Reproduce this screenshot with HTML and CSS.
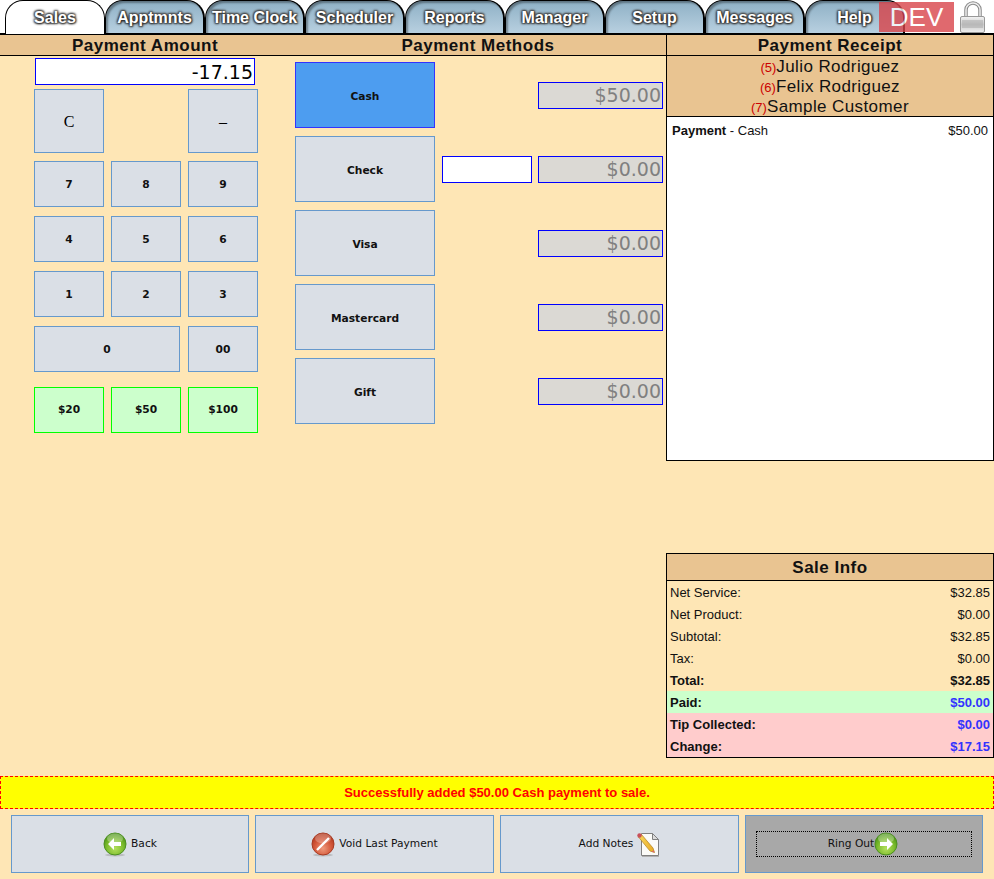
FILE: index.html
```html
<!DOCTYPE html>
<html lang="en">

<head>
    <meta charset="UTF-8">
    <meta name="viewport" content="width=device-width, initial-scale=1.0">
    <title>Payment</title>
    <link rel="stylesheet" href="styles.css">
</head>

<body>

    <svg class="defs" width="0" height="0" aria-hidden="true">
        <defs>
            <radialGradient id="greenBall" cx="50%" cy="70%" r="65%">
                <stop offset="0" stop-color="#b4e05e" />
                <stop offset="0.6" stop-color="#7cbc2c" />
                <stop offset="1" stop-color="#4c9418" />
            </radialGradient>
            <radialGradient id="redBall" cx="50%" cy="70%" r="65%">
                <stop offset="0" stop-color="#ee9a7c" />
                <stop offset="0.6" stop-color="#d4583a" />
                <stop offset="1" stop-color="#b23a20" />
            </radialGradient>
            <linearGradient id="lockBody" x1="0" y1="0" x2="0" y2="1">
                <stop offset="0" stop-color="#f4f4f4" />
                <stop offset="0.5" stop-color="#cacaca" />
                <stop offset="1" stop-color="#f0f0f0" />
            </linearGradient>
            <linearGradient id="pencil" x1="0" y1="0" x2="1" y2="0">
                <stop offset="0" stop-color="#f8d860" />
                <stop offset="1" stop-color="#e8a820" />
            </linearGradient>
        </defs>
    </svg>

    <nav class="tabs">
        <a class="tab active">Sales</a>
        <a class="tab">Apptmnts</a>
        <a class="tab">Time Clock</a>
        <a class="tab">Scheduler</a>
        <a class="tab">Reports</a>
        <a class="tab">Manager</a>
        <a class="tab">Setup</a>
        <a class="tab">Messages</a>
        <a class="tab">Help</a>
    </nav>
    <div class="dev">DEV</div>
    <svg class="lock" width="26" height="33" viewBox="0 0 26 33">
        <path d="M6 16V9a7 7 0 0 1 14 0v7" fill="none" stroke="#8a8a8a" stroke-width="3.500" />
        <path d="M6 16V9a7 7 0 0 1 14 0v7" fill="none" stroke="#eee" stroke-width="1.500" />
        <rect x="0.500" y="15.500" width="24" height="16" rx="1.500" fill="url(#lockBody)" stroke="#999" />
        <path d="M2 20h21M2 22h21M2 24h21M2 26h21" stroke="#a8a8a8" />
    </svg>

    <main class="main">
        <div class="left">
            <div class="headers">
                <h2 class="head-amount">Payment Amount</h2>
                <h2 class="head-methods">Payment Methods</h2>
            </div>
            <div class="left-body">
                <section class="amount-col">
                    <input class="amount" type="text" value="-17.15">
                    <div class="keypad">
                        <button class="btn key-c">C</button>
                        <button class="btn key-minus">–</button>
                        <button class="btn">7</button>
                        <button class="btn">8</button>
                        <button class="btn">9</button>
                        <button class="btn">4</button>
                        <button class="btn">5</button>
                        <button class="btn">6</button>
                        <button class="btn">1</button>
                        <button class="btn">2</button>
                        <button class="btn">3</button>
                        <button class="btn key-zero">0</button>
                        <button class="btn">00</button>
                        <button class="btn quick">$20</button>
                        <button class="btn quick">$50</button>
                        <button class="btn quick">$100</button>
                    </div>
                </section>
                <section class="methods">
                    <div class="method">
                        <button class="btn method-btn selected">Cash</button>
                        <span class="ref-slot"></span>
                        <input class="paid" type="text" value="$50.00" disabled>
                    </div>
                    <div class="method">
                        <button class="btn method-btn">Check</button>
                        <input class="ref" type="text">
                        <input class="paid" type="text" value="$0.00" disabled>
                    </div>
                    <div class="method">
                        <button class="btn method-btn">Visa</button>
                        <span class="ref-slot"></span>
                        <input class="paid" type="text" value="$0.00" disabled>
                    </div>
                    <div class="method">
                        <button class="btn method-btn">Mastercard</button>
                        <span class="ref-slot"></span>
                        <input class="paid" type="text" value="$0.00" disabled>
                    </div>
                    <div class="method">
                        <button class="btn method-btn">Gift</button>
                        <span class="ref-slot"></span>
                        <input class="paid" type="text" value="$0.00" disabled>
                    </div>
                </section>
            </div>
        </div>

        <aside class="right">
            <div class="receipt">
                <h2 class="receipt-head">Payment Receipt</h2>
                <div class="people">
                    <div class="person"><span class="num">(5)</span>Julio Rodriguez</div>
                    <div class="person"><span class="num">(6)</span>Felix Rodriguez</div>
                    <div class="person"><span class="num">(7)</span>Sample Customer</div>
                </div>
                <div class="receipt-body">
                    <div class="receipt-line">
                        <span><b>Payment</b> - Cash</span>
                        <span>$50.00</span>
                    </div>
                </div>
            </div>

            <div class="sale-info">
                <h2 class="sale-head">Sale Info</h2>
                <div class="row"><span>Net Service:</span><span>$32.85</span></div>
                <div class="row"><span>Net Product:</span><span>$0.00</span></div>
                <div class="row"><span>Subtotal:</span><span>$32.85</span></div>
                <div class="row"><span>Tax:</span><span>$0.00</span></div>
                <div class="row bold"><span>Total:</span><span>$32.85</span></div>
                <div class="row bold paid-row"><span>Paid:</span><span class="blue">$50.00</span></div>
                <div class="row bold tip-row"><span>Tip Collected:</span><span class="blue">$0.00</span></div>
                <div class="row bold tip-row"><span>Change:</span><span class="blue">$17.15</span></div>
            </div>
        </aside>
    </main>

    <div class="message">Successfully added $50.00 Cash payment to sale.</div>

    <footer class="actions">
        <button class="btn action">
            <svg class="ball" width="24" height="25" viewBox="0 0 24 25">
                <ellipse cx="12" cy="23" rx="10" ry="1.500" fill="#999" opacity="0.5" />
                <circle cx="12" cy="12" r="11" fill="url(#greenBall)" stroke="#4c8f22" />
                <ellipse cx="12" cy="6.500" rx="8" ry="5" fill="#fff" opacity="0.3" />
                <path d="M5 12l6-6v4h7v4h-7v4z" fill="#fff" />
            </svg>
            <span class="label">Back</span>
        </button>
        <button class="btn action">
            <svg class="ball" width="24" height="25" viewBox="0 0 24 25">
                <ellipse cx="12" cy="23" rx="10" ry="1.500" fill="#999" opacity="0.5" />
                <circle cx="12" cy="12" r="11" fill="url(#redBall)" stroke="#a83a22" />
                <ellipse cx="12" cy="6.500" rx="8" ry="5" fill="#fff" opacity="0.25" />
                <path d="M6 18L18 6" stroke="#fff" stroke-width="2.400" />
            </svg>
            <span class="label">Void Last Payment</span>
        </button>
        <button class="btn action">
            <span class="label">Add Notes</span>
            <svg width="23" height="25" viewBox="0 0 23 25">
                <path d="M4.500 1.500h11l6 6v16h-17z" fill="#fbfbf8" stroke="#808080" />
                <path d="M15.500 1.500v6h6z" fill="#dcdcdc" stroke="#808080" />
                <path d="M5 24.500h17" stroke="#b0b0b0" />
                <path d="M1.500 5l3-2.500L16 16l1.500 4.500L13 19z" fill="url(#pencil)" stroke="#b08020" stroke-width="0.700" />
                <path d="M14.800 19.700l1.800-1.400.9 2.200z" fill="#e06070" />
                <circle cx="2.500" cy="3.500" r="2.200" fill="#c8505a" />
            </svg>
        </button>
        <button class="btn action ring-out">
            <span class="focus-box">
                <span class="label">Ring Out</span>
                <svg class="ball" width="24" height="25" viewBox="0 0 24 25">
                    <circle cx="12" cy="12" r="11" fill="url(#greenBall)" stroke="#4c8f22" />
                    <ellipse cx="12" cy="6.500" rx="8" ry="5" fill="#fff" opacity="0.3" />
                    <path d="M19 12l-6-6v4H6v4h7v4z" fill="#fff" />
                </svg>
            </span>
        </button>
    </footer>

</body>

</html>
```

FILE: styles.css
```css
body {
    font-family: "Liberation Sans", Arial, sans-serif;
    margin: 0;
    padding: 0;
    width: 994px;
    height: 879px;
    overflow: hidden;
    position: relative;
    background-color: #fee6b5;
    color: #000;
}

h2 {
    margin: 0;
    font-size: 17px;
    font-weight: bold;
    letter-spacing: 0.5px;
    color: #111;
    text-align: center;
}

.defs {
    display: block;
    height: 0;
}

/* top tabs */
.tabs {
    display: flex;
    height: 33px;
    padding-left: 5px;
    background-color: #fff;
    border-bottom: 2px solid #000;
}

.tab {
    box-sizing: border-box;
    width: 100px;
    height: 33px;
    line-height: 34px;
    text-align: center;
    font-size: 16px;
    font-weight: bold;
    color: #fff;
    text-shadow: 1px 1px 2px #222, -1px -1px 2px #444, 1px -1px 2px #444, -1px 1px 2px #444;
    background: linear-gradient(#8eb0c5, #b8d0e0);
    box-shadow: inset 2px 2px 2px rgba(0, 0, 0, 0.35);
    border: 1px solid #000;
    border-width: 1px 2px 0 1px;
    border-radius: 18px 18px 0 0;
}

.tab.active {
    height: 34px;
    background: #fff;
    box-shadow: none;
    border-width: 1px 1px 0 1px;
}

.dev {
    position: absolute;
    left: 879px;
    top: 2px;
    width: 75px;
    height: 30px;
    line-height: 30px;
    text-align: center;
    font-size: 26px;
    color: #fff;
    background-color: #d9444a;
    opacity: 0.8;
}

.lock {
    position: absolute;
    left: 960px;
    top: 1px;
}

/* main area */
.main {
    display: flex;
    height: 741px;
}

.left {
    width: 666px;
}

.headers {
    display: flex;
    height: 20px;
    line-height: 22px;
    background-color: #e9c491;
    border-bottom: 1px solid #000;
}

.head-amount {
    width: 290px;
}

.head-methods {
    width: 376px;
}

.left-body {
    display: flex;
}

.amount-col {
    width: 295px;
    box-sizing: border-box;
    padding: 2px 0 0 34px;
}

.amount {
    display: block;
    box-sizing: border-box;
    width: 220px;
    height: 27px;
    margin: 0 0 4px 1px;
    padding: 0 1px;
    border: 1px solid #00f;
    background-color: #fff;
    color: #000;
    font-family: "DejaVu Sans", sans-serif;
    font-size: 19px;
    text-align: right;
    border-radius: 0;
    outline: none;
}

.keypad {
    display: grid;
    grid-template-columns: 70px 70px 70px;
    grid-template-rows: 63px 46px 46px 46px 46px 46px;
    column-gap: 7px;
    row-gap: 9px;
}

.btn {
    box-sizing: border-box;
    padding: 0;
    margin: 0;
    border: 1px solid #6699cc;
    border-radius: 0;
    background-color: #dadfe6;
    color: #111;
    font-family: "DejaVu Sans", sans-serif;
    font-size: 10.67px;
    font-weight: bold;
}

.key-c {
    height: 64px;
    padding-top: 2px;
    color: #000;
    font-family: "Liberation Serif", serif;
    font-size: 16px;
    font-weight: normal;
}

.key-minus {
    grid-column: 3;
    height: 64px;
    padding-top: 2px;
    color: #000;
    font-family: "Liberation Serif", serif;
    font-size: 16px;
    font-weight: normal;
}

.key-zero {
    grid-column: 1 / 3;
    width: 146px;
}

.quick {
    margin-top: 6px;
    height: 46px;
    padding-bottom: 1px;
    background-color: #ccffcc;
    border-color: #00ff00;
}

/* payment methods */
.methods {
    display: flex;
    flex-direction: column;
    gap: 8px;
    padding-top: 6px;
}

.method {
    display: flex;
    align-items: center;
    height: 66px;
}

.method-btn {
    width: 140px;
    height: 66px;
    padding-top: 2px;
}

.method-btn.selected {
    background-color: #4d9df0;
    border-color: #3333ff;
}

.ref,
.ref-slot {
    box-sizing: border-box;
    width: 90px;
    height: 27px;
    margin-left: 7px;
    margin-right: 6px;
}

.ref {
    border: 1px solid #00f;
    background-color: #fff;
    border-radius: 0;
    outline: none;
}

.paid {
    box-sizing: border-box;
    width: 125px;
    height: 27px;
    padding: 0 1px;
    border: 1px solid #00f;
    border-radius: 0;
    background-color: #dbd9d4;
    color: #808080;
    font-family: "DejaVu Sans", sans-serif;
    font-size: 19px;
    text-align: right;
}

/* receipt + sale info */
.right {
    width: 328px;
    display: flex;
    flex-direction: column;
    justify-content: space-between;
    height: 723px;
}

.receipt {
    box-sizing: border-box;
    height: 426px;
    border: 1px solid #000;
    border-top: none;
    background-color: #fff;
}

.receipt-head {
    height: 20px;
    line-height: 22px;
    background-color: #e9c491;
    border-bottom: 1px solid #000;
}

.people {
    height: 60px;
    background-color: #e9c491;
    border-bottom: 1px solid #000;
    text-align: center;
    font-size: 17px;
    letter-spacing: 0.4px;
    color: #111;
}

.person {
    height: 20px;
    line-height: 22px;
}

.num {
    color: #c00;
    font-size: 13px;
    letter-spacing: 0;
}

.receipt-line {
    display: flex;
    justify-content: space-between;
    padding: 6px 5px 0 5px;
    font-size: 13px;
    color: #111;
}

.sale-info {
    box-sizing: border-box;
    height: 205px;
    border: 1px solid #000;
    font-size: 13px;
}

.sale-head {
    height: 26px;
    line-height: 28px;
    background-color: #e9c491;
    border-bottom: 1px solid #000;
}

.row {
    display: flex;
    justify-content: space-between;
    height: 22px;
    line-height: 24px;
    padding: 0 3px;
    color: #111;
}

.bold {
    font-weight: bold;
}

.blue {
    color: #3333ff;
}

.paid-row {
    background-color: #ccffcc;
}

.tip-row {
    background-color: #ffcccc;
}

/* message + bottom buttons */
.message {
    box-sizing: border-box;
    height: 33px;
    line-height: 31px;
    border: 1px dashed #f00;
    background-color: #ff0;
    color: #f00;
    font-size: 13px;
    font-weight: bold;
    text-align: center;
}

.actions {
    display: grid;
    grid-template-columns: 238px 239px 239px 238px;
    gap: 6px;
    padding: 6px 0 0 11px;
}

.action {
    height: 58px;
    display: flex;
    align-items: center;
    justify-content: center;
    gap: 4px;
    font-weight: normal;
}

.label {
    margin-bottom: 2px;
}

.ring-out {
    background-color: #a8a8a8;
}

.focus-box {
    box-sizing: border-box;
    width: 216px;
    height: 26px;
    padding-right: 2px;
    display: flex;
    align-items: center;
    justify-content: center;
    border: 1px dotted #000;
}
```
